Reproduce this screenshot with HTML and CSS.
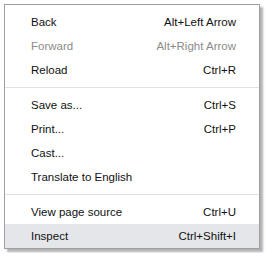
FILE: index.html
```html
<!DOCTYPE html>
<html lang="en">
<head>
  <meta charset="UTF-8" />
  <title>Context menu</title>
  <link rel="stylesheet" href="styles.css">
</head>
<body>
  <div class="menu">
    <div class="item"><span>Back</span><span class="key">Alt+Left Arrow</span></div>
    <div class="item disabled"><span>Forward</span><span class="key">Alt+Right Arrow</span></div>
    <div class="item"><span>Reload</span><span class="key">Ctrl+R</span></div>
    <div class="sep"></div>
    <div class="item"><span>Save as...</span><span class="key">Ctrl+S</span></div>
    <div class="item"><span>Print...</span><span class="key">Ctrl+P</span></div>
    <div class="item"><span>Cast...</span></div>
    <div class="item"><span>Translate to English</span></div>
    <div class="sep"></div>
    <div class="item"><span>View page source</span><span class="key">Ctrl+U</span></div>
    <div class="item hover"><span>Inspect</span><span class="key">Ctrl+Shift+I</span></div>
  </div>
</body>
</html>
```

FILE: styles.css
```css
* {
  margin: 0;
  padding: 0;
  box-sizing: border-box;
}

body {
  background: #fff;
  padding: 4px;
  font-family: 'Liberation Sans', Arial, sans-serif;
  font-size: 11.5px;
  color: #111;
}

.menu {
  width: 256px;
  background: #fff;
  border: 1px solid #a0a0a0;
  box-shadow: 3px 3px 2px rgba(0, 0, 0, 0.3);
  padding-top: 5px;
}

.item {
  height: 24px;
  display: flex;
  align-items: center;
  justify-content: space-between;
  padding: 0 23px 0 26px;
}

.item.disabled {
  color: #8b8b8b;
}

.item.hover {
  background: #e5e6ea;
}

.sep {
  height: 11px;
  display: flex;
  align-items: center;
}

.sep::before {
  content: '';
  flex: 1;
  height: 1px;
  background: #e2e2e2;
}
```
